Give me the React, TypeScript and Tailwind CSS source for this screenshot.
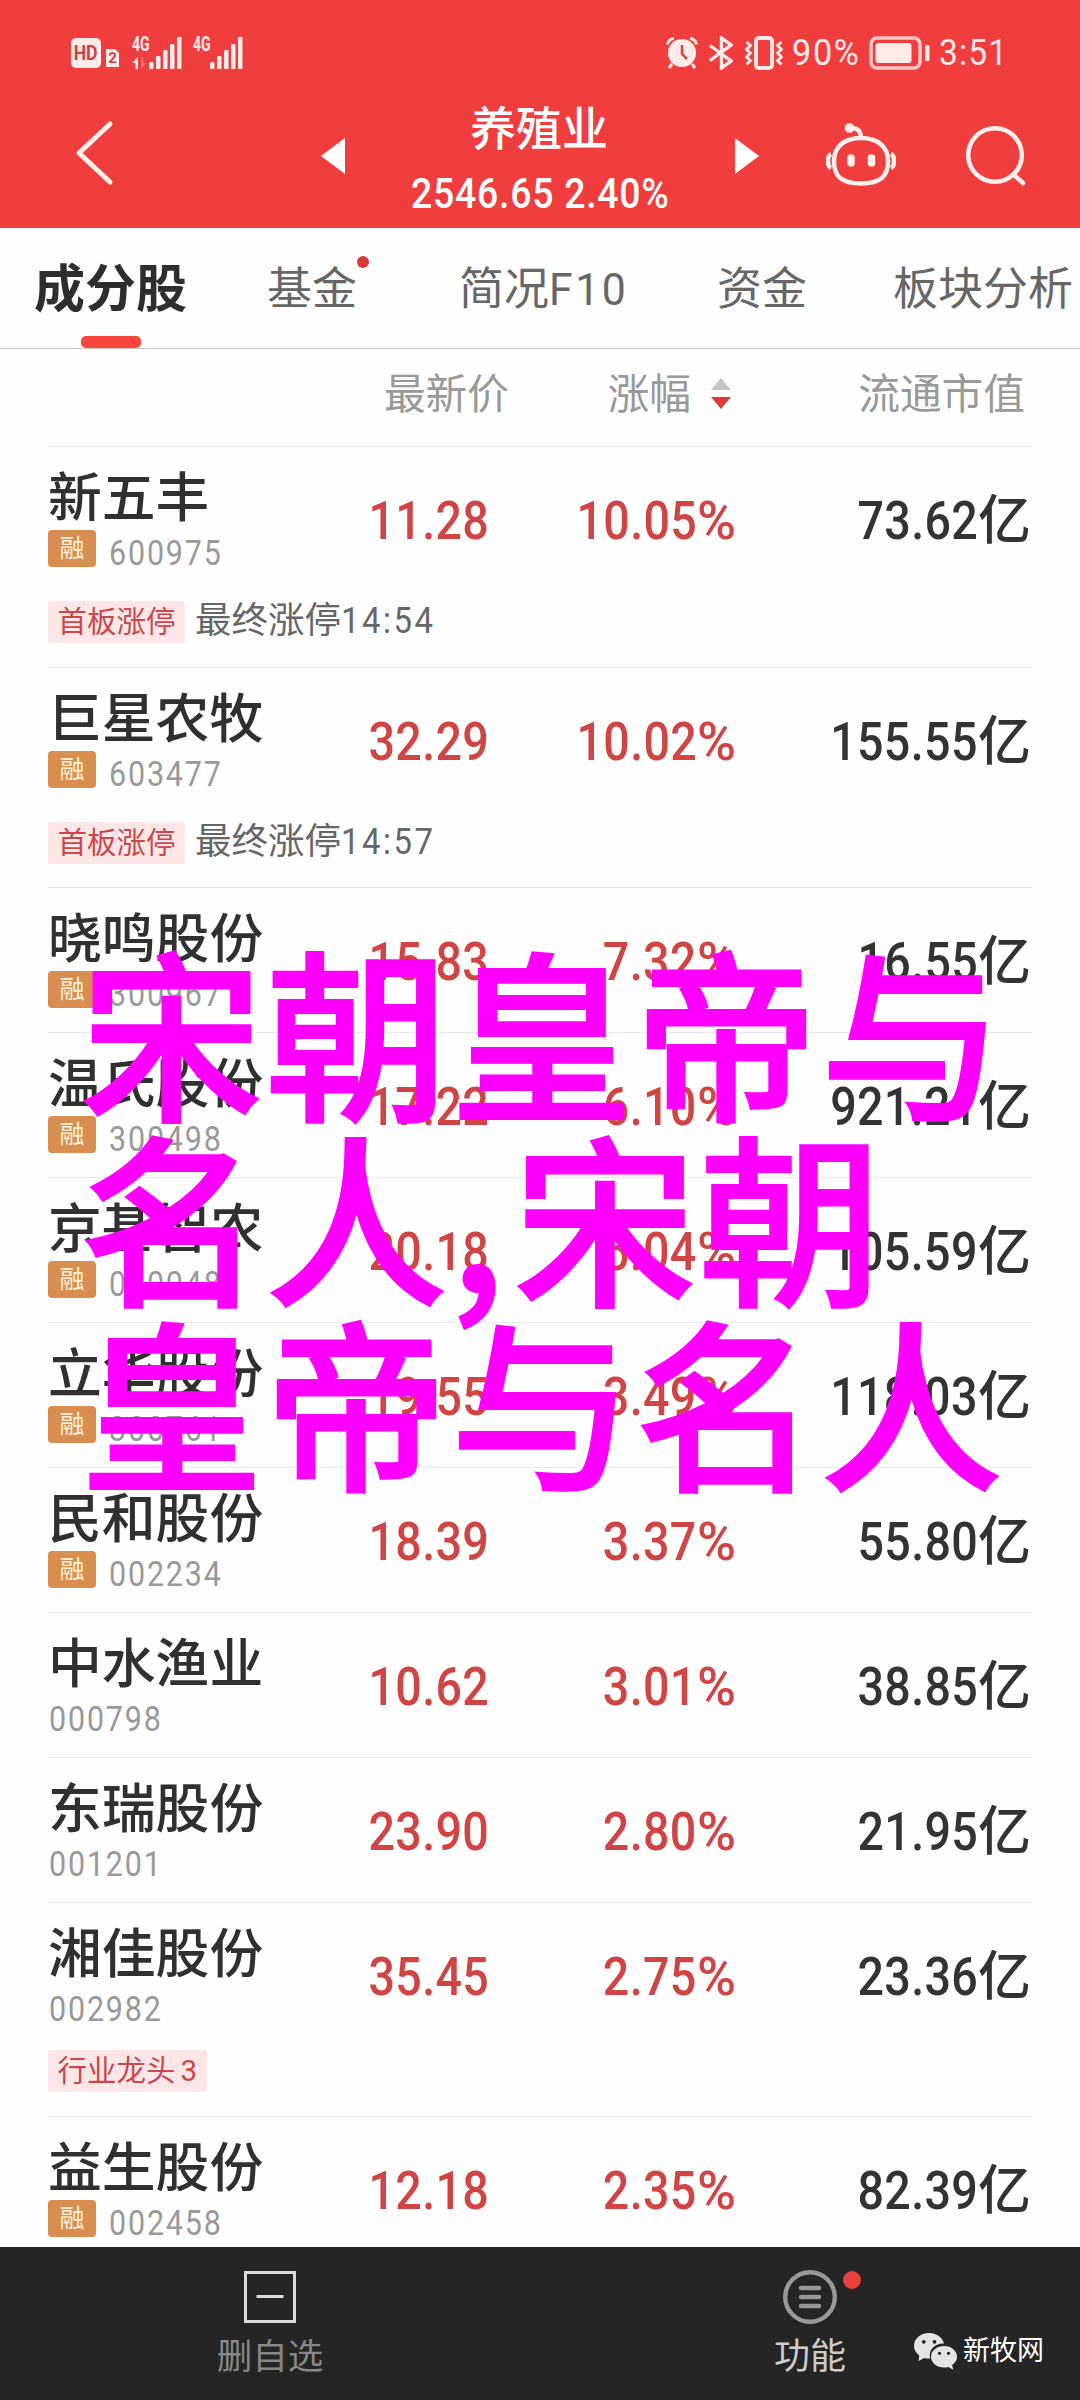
import type { ReactNode } from "react";

type Stock = {
  name: string;
  code: string;
  price: string;
  change: string;
  cap: string;
  margin?: boolean;
  tag?: string;
  note?: string;
  time?: string;
  height: string;
};

const stocks: Stock[] = [
  { name: "新五丰", code: "600975", price: "11.28", change: "10.05", cap: "73.62", margin: true, tag: "首板涨停", note: "最终涨停", time: "14:54", height: "h-[221px]" },
  { name: "巨星农牧", code: "603477", price: "32.29", change: "10.02", cap: "155.55", margin: true, tag: "首板涨停", note: "最终涨停", time: "14:57", height: "h-[220px]" },
  { name: "晓鸣股份", code: "300967", price: "15.83", change: "7.32", cap: "16.55", margin: true, height: "h-[145px]" },
  { name: "温氏股份", code: "300498", price: "17.22", change: "6.10", cap: "921.21", margin: true, height: "h-[145px]" },
  { name: "京基智农", code: "000048", price: "20.18", change: "5.04", cap: "105.59", margin: true, height: "h-[145px]" },
  { name: "立华股份", code: "300761", price: "19.55", change: "3.49", cap: "118.03", margin: true, height: "h-[145px]" },
  { name: "民和股份", code: "002234", price: "18.39", change: "3.37", cap: "55.80", margin: true, height: "h-[145px]" },
  { name: "中水渔业", code: "000798", price: "10.62", change: "3.01", cap: "38.85", height: "h-[145px]" },
  { name: "东瑞股份", code: "001201", price: "23.90", change: "2.80", cap: "21.95", height: "h-[145px]" },
  { name: "湘佳股份", code: "002982", price: "35.45", change: "2.75", cap: "23.36", tag: "行业龙头", time: "3", height: "h-[214px]" },
  { name: "益生股份", code: "002458", price: "12.18", change: "2.35", cap: "82.39", margin: true, height: "h-[131px]" },
];

const Signal = ({ arrows }: { arrows?: boolean }) => (
  <div className="flex items-end">
    <div className="flex flex-col h-[32px] w-[17px] justify-between">
      <span className="text-[20px] leading-[15px] font-bold inline-block origin-left scale-x-[.7] whitespace-nowrap">4G</span>
      {arrows && (
        <svg className="w-[16px] h-[12px]" viewBox="0 0 16 12" fill="currentColor">
          <path d="M0 6 6 0v12H3.500V6z" />
          <path d="M9 0h2v6h3L9 12z" opacity=".35" />
        </svg>
      )}
    </div>
    <svg className="w-[33px] h-[32px]" viewBox="0 0 33 32" fill="currentColor">
      <rect x="0" y="25" width="4.500" height="7" rx="1.500" />
      <rect x="7" y="19" width="4.500" height="13" rx="1" />
      <rect x="14" y="13" width="4.500" height="19" rx="1" />
      <rect x="21" y="7" width="4.500" height="25" rx="1" />
      <rect x="28" y="0" width="4.500" height="32" rx="1" />
    </svg>
  </div>
);

const StatusBar = () => (
  <div className="flex items-center h-[60px] mt-[23px] pl-[71px] pr-[75px] text-[#ffeaea]">
    <div className="w-[30px] h-[30px] rounded-[5px] bg-[#ffeaea] text-[#c84444] flex items-center justify-center">
      <span className="text-[20px] leading-none font-bold scale-x-[.88]">HD</span>
    </div>
    <div className="relative w-[13px] h-[18px] ml-[5px] mt-[9px]">
      <svg className="absolute inset-0" viewBox="0 0 13 18" fill="currentColor">
        <path d="M0 0h9l4 4v14H0z" />
      </svg>
      <span className="absolute inset-0 text-center text-[15px] leading-[19px] font-bold text-[#c84444]">2</span>
    </div>
    <div className="ml-[13px]">
      <Signal arrows />
    </div>
    <div className="ml-[11px]">
      <Signal />
    </div>
    <div className="ml-auto flex items-center">
      {/* alarm */}
      <svg className="w-[32px] h-[32px]" viewBox="0 0 32 32" fill="none" stroke="currentColor">
        <circle cx="16" cy="16" r="14" fill="currentColor" stroke="none" />
        <path d="M1.500 7.500C2 4 5 1.500 8 1.500M30.500 7.500C30 4 27 1.500 24 1.500" strokeWidth="3" />
        <path d="M6 27 3 31M26 27l3 4" strokeWidth="3" />
        <path d="M16 8v9l5 5" stroke="#d94444" strokeWidth="2.500" />
      </svg>
      {/* bluetooth */}
      <svg className="w-[24px] h-[34px] ml-[11px] mr-px" viewBox="0 0 24 34" fill="none" stroke="currentColor" strokeWidth="3.400">
        <path d="M1 9.500 22 25 12.500 32V2L22 9 1 24.500" />
      </svg>
      {/* vibrate */}
      <svg className="w-[38px] h-[34px] ml-[11px] mr-px" viewBox="0 0 38 34" fill="none" stroke="currentColor">
        <rect x="11" y="2" width="16" height="30" rx="3" strokeWidth="3.800" />
        <path d="M1.500 6l4 3.500-4 4 4 3.500-4 4 4 3.500-4 4M36.500 6l-4 3.500 4 4-4 3.500 4 4-4 3.500 4 4" strokeWidth="2.800" />
      </svg>
      <span className="w-[74px] ml-[8px] text-[36px] leading-none">
        <span className="inline-block origin-left scale-x-[.95] tracking-[1.800px]">90%</span>
      </span>
      <svg className="w-[61px] h-[34px] ml-[3px] mr-px" viewBox="0 0 61 34" fill="none">
        <rect x="2" y="2" width="49" height="30" rx="6" stroke="currentColor" strokeWidth="3.500" opacity=".8" />
        <rect x="6.500" y="7" width="36" height="20" rx="3" fill="currentColor" />
        <rect x="56" y="9" width="4.500" height="16" rx="1.500" fill="currentColor" />
      </svg>
      <span className="w-[66px] ml-[8px] text-[36px] leading-none">
        <span className="inline-block origin-left scale-x-[.93] tracking-[1.300px]">3:51</span>
      </span>
    </div>
  </div>
);

const Header = () => (
  <header className="h-[228px] bg-[#f03d3e] text-white overflow-hidden">
    <StatusBar />
    <div className="flex items-start h-[145px] pl-[74px]">
      <svg className="w-[40px] h-[66px] mt-[37px]" viewBox="0 0 40 66" fill="none" stroke="#fff0ee" strokeWidth="5" strokeLinecap="round" strokeLinejoin="round">
        <path d="M36 4 5 33l31 29" />
      </svg>
      <svg className="w-[24px] h-[36px] mt-[55px] ml-[207px]" viewBox="0 0 24 36" fill="currentColor">
        <path d="M24 0v36L0 18z" />
      </svg>
      <div className="w-[390px] flex flex-col items-center">
        <h1 className="text-[46px] leading-[60px] mt-[16px] mr-[2px] font-medium">养殖业</h1>
        <p className="text-[42px] leading-[50px] mt-[10px] font-medium whitespace-nowrap scale-x-[.89] tracking-[.850px]">2546.65 2.40%</p>
      </div>
      <svg className="w-[24px] h-[36px] mt-[55px]" viewBox="0 0 24 36" fill="currentColor">
        <path d="M0 0v36l24-18z" />
      </svg>
      {/* assistant robot */}
      <svg className="w-[70px] h-[66px] mt-[39px] ml-[67px]" viewBox="0 0 70 66" fill="none" stroke="#fff0ee" strokeWidth="4.500">
        <circle cx="23.500" cy="6" r="4.800" fill="#fff0ee" stroke="none" />
        <path d="M24 6c8-.5 11 3 11 11" />
        <path d="M35 16c17 0 27 9 27 23 0 15-7 22.500-27 22.500S8 54 8 39C8 25 18 16 35 16z" />
        <path d="M5 32c-4 2-4 12 0 14M65 32c4 2 4 12 0 14" strokeWidth="4.500" />
        <path d="M25 36v5M45.500 36v5" strokeWidth="7.500" strokeLinecap="round" />
      </svg>
      <svg className="w-[62px] h-[62px] mt-[42px] ml-[69px]" viewBox="0 0 62 62" fill="none" stroke="#fff0ee" strokeWidth="4.500" strokeLinecap="round">
        <circle cx="30" cy="30" r="26.800" />
        <path d="M49 50l9 8" />
      </svg>
    </div>
  </header>
);

const Tabs = () => (
  <nav className="flex items-center h-[121px] pt-[4px] pl-[34px] border-b border-[#c8c8c8] text-[45px] text-[#666] whitespace-nowrap">
    <div className="relative h-full w-[154px] flex items-center text-[51px] font-bold text-[#2e2e2e]">
      成分股
      <div className="absolute left-[47px] bottom-0 w-[60px] h-[12px] rounded-[5px] bg-[#fb463c]" />
    </div>
    <div className="relative ml-[79px] w-[90px]">
      基金
      <div className="absolute left-[90px] top-0 w-[12px] h-[12px] rounded-full bg-[#d83a3a]" />
    </div>
    <div className="ml-[102px] w-[168px]">
      简况<span className="inline-block origin-left scale-x-[.95] tracking-[2.700px]">F10</span>
    </div>
    <div className="ml-[90px] w-[90px]">资金</div>
    <div className="ml-[86px]">板块分析</div>
  </nav>
);

const TableHead = () => (
  <div className="grid grid-cols-[461px_182px_334px] h-[97px] pl-[48px] pt-[19px] text-[41.700px] leading-[54px] text-[#999] text-right">
    <div>最新价</div>
    <div>涨幅</div>
    <div className="relative">
      <svg className="absolute left-[20px] top-[10px] w-[20px] h-[31px]" viewBox="0 0 20 31">
        <path d="M10 0 20 12H0z" fill="#c4c4c4" />
        <path d="M10 31 20 19H0z" fill="#dc3a35" />
      </svg>
      流通市值
    </div>
  </div>
);

const Num = ({ children }: { children: ReactNode }) => (
  <span className="inline-block origin-right scale-x-[.88] tracking-[.400px]">{children}</span>
);

const Row = ({ stock }: { stock: Stock }) => (
  <div className={`${stock.height} mx-[48px] border-t border-[#e9e9e9] overflow-hidden`}>
    <div className="grid grid-cols-[260px_181px_247px_295px]">
      <div>
        <div className="mt-[21px] text-[53.800px] leading-[62px] font-medium text-[#303030] whitespace-nowrap">{stock.name}</div>
        <div className={stock.margin ? "flex h-[38px]" : "flex h-[31px] pl-px"}>
          {stock.margin && (
            <span className="w-[48px] h-[37px] rounded-[4px] bg-[#d88e50] text-[#fff2d8] text-[25px] leading-[38px] text-center mr-[13px]">融</span>
          )}
          <span className="inline-block origin-left scale-x-[.87] mt-[3px] text-[35px] leading-[41px] tracking-[2.100px] text-[#999]">{stock.code}</span>
        </div>
        {stock.tag && (
          <div className="flex items-center mt-[33px] h-[42px] whitespace-nowrap">
            <span className="h-[42px] px-[9.500px] rounded-[3px] bg-[#fce7e8] text-[29.500px] leading-[43px] text-[#cb474b]">
              {stock.tag}
              {!stock.note && <span className="ml-[5px]">{stock.time}</span>}
            </span>
            {stock.note && (
              <span className="ml-[10px] text-[36.500px] leading-[40px] -mt-[2px] text-[#666]">
                {stock.note}
                <span className="inline-block origin-left scale-x-[.9] tracking-[2.800px]">{stock.time}</span>
              </span>
            )}
          </div>
        )}
      </div>
      <div className="mt-[44px] text-right text-[53px] leading-[60px] font-medium text-[#d04444]">
        <Num>{stock.price}</Num>
      </div>
      <div className="mt-[44px] text-right text-[53px] leading-[60px] font-medium text-[#d04444] whitespace-nowrap">
        <Num>{stock.change}</Num>
        <span>%</span>
      </div>
      <div className="mt-[44px] text-right text-[53px] leading-[60px] font-medium text-[#333] whitespace-nowrap">
        <Num>{stock.cap}</Num>
        <span>亿</span>
      </div>
    </div>
  </div>
);

const Footer = () => (
  <footer className="relative h-[153px] bg-[#252525] grid grid-cols-[540px_540px] overflow-hidden text-[36px] leading-[44px]">
    <div className="flex flex-col items-center pt-[24px]">
      <svg className="w-[52px] h-[52px]" viewBox="0 0 52 52" fill="none" stroke="#dcdcdc" strokeWidth="3">
        <path d="M1.500 1.500h49v49h-49zM12.500 25.500h27" />
      </svg>
      <span className="mt-[12px] text-[35.500px] text-[#888]">删自选</span>
    </div>
    <div className="relative flex flex-col items-center pt-[23px]">
      <svg className="w-[54px] h-[54px]" viewBox="0 0 54 54" fill="none" stroke="#999">
        <circle cx="27" cy="27" r="24.800" strokeWidth="4.400" />
        <path d="M18 18h18M18 27h18M18 36h18" strokeWidth="4.400" strokeLinecap="round" />
      </svg>
      <div className="absolute left-[303px] top-[24px] w-[18px] h-[18px] rounded-full bg-[#e8403c]" />
      <span className="mt-[11px] text-[#ccc]">功能</span>
    </div>
    {/* channel watermark */}
    <div className="absolute left-[914px] top-[82px] flex items-center text-white text-[27px]">
      <svg className="w-[43px] h-[38px] mr-[6px]" viewBox="0 0 43 38" fill="#e4e4e4">
        <path d="M15 1C6.500 1 0 6.700 0 13.800c0 4 2 7.400 5.300 9.700L4.500 29l5.800-3c1.500.4 3.100.6 4.700.6h1.200c-2.400-8.600 5-15.500 13.800-15C28.500 5.500 22.500 1 15 1z" />
        <path d="M43 24.800c0-6-5.800-10.800-13-10.800s-13 4.800-13 10.800 5.800 10.800 13 10.800c1.500 0 3-.2 4.300-.6l5 2.700-1.200-4.600c3-2 4.900-5 4.900-8.300z" />
        <g fill="#252525">
          <circle cx="9.800" cy="9.800" r="1.900" />
          <circle cx="20.500" cy="9.800" r="1.900" />
          <circle cx="25.500" cy="21.300" r="1.600" />
          <circle cx="34.500" cy="21.300" r="1.600" />
        </g>
      </svg>
      新牧网
    </div>
  </footer>
);

const App = () => {
  return (
    <div className="relative w-[1080px] h-[2400px] overflow-hidden bg-[#fefefe] font-['Roboto','Noto_Sans_CJK_SC',sans-serif]">
      <Header />
      <Tabs />
      <TableHead />
      {stocks.map((stock) => (
        <Row key={stock.code} stock={stock} />
      ))}
      <Footer />

      {/* Caption over the list */}
      <div className="absolute left-[80px] top-[935px] font-['Noto_Sans_CJK_SC',sans-serif] text-[183px] leading-[185px] tracking-[2px] font-medium text-[#ff00ff] [-webkit-text-stroke:2px_#ff00ff] whitespace-nowrap">
        <div>宋朝皇帝与</div>
        <div>
          名人<span className="mr-[7px]">,</span>宋朝
        </div>
        <div>皇帝与名人</div>
      </div>
    </div>
  );
};

export default App;
